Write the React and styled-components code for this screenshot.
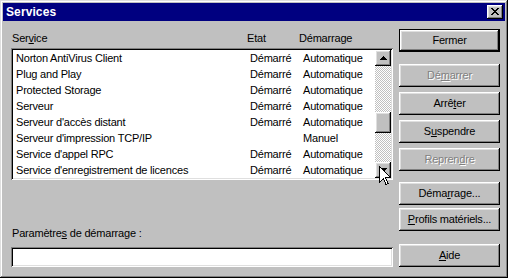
import React from 'react';
import styled, {createGlobalStyle, css} from 'styled-components';

const GlobalStyle = createGlobalStyle`
    html, body{
        margin: 0;
        padding: 0;
        background: #c0c0c0;
    }
    body{
        font-family: "Liberation Sans", Arial, sans-serif;
        font-size: 11px;
        letter-spacing: -0.2px;
        color: #000;
    }
`

const raised = css`
    box-shadow: inset -1px -1px #000, inset 1px 1px #fff, inset -2px -2px #808080, inset 2px 2px #dfdfdf;
`

const sunken = css`
    box-shadow: inset 1px 1px #808080, inset -1px -1px #fff, inset 2px 2px #000, inset -2px -2px #dfdfdf;
`

const Window = styled.div`
    position: relative;
    width: 508px;
    height: 278px;
    box-sizing: border-box;
    padding: 3px;
    background: #c0c0c0;
    box-shadow: inset -1px -1px #000, inset 1px 1px #dfdfdf, inset -2px -2px #808080, inset 2px 2px #fff;
    display: flex;
    flex-direction: column;
`

const TitleBar = styled.div`
    height: 18px;
    flex-shrink: 0;
    background: #000080;
    color: #fff;
    display: flex;
    align-items: center;
    justify-content: space-between;
    padding: 0 2px 0 3px;
`

const Title = styled.span`
    font-weight: bold;
    font-size: 12px;
    letter-spacing: 0.1px;
    line-height: 14px;
`

const CloseButton = styled.div`
    width: 16px;
    height: 14px;
    background: #c0c0c0;
    ${raised}
    display: flex;
    align-items: center;
    justify-content: center;
    padding-bottom: 1px;
    box-sizing: border-box;
`

const Body = styled.div`
    flex: 1;
    display: grid;
    grid-template-columns: 382px 101px;
    column-gap: 6px;
    padding: 8px 0 8px 8px;
`

const LeftColumn = styled.div`
    display: flex;
    flex-direction: column;
`

const Header = styled.div`
    height: 19px;
    display: grid;
    grid-template-columns: 235px 52px 1fr;
    align-items: center;
    padding-left: 1px;
    line-height: 13px;
`

const ListBox = styled.div`
    height: 132px;
    box-sizing: border-box;
    padding: 2px;
    background: #fff;
    ${sunken}
    display: flex;
`

const Rows = styled.div`
    flex: 1;
`

const Row = styled.div`
    height: 16px;
    line-height: 16px;
    display: grid;
    grid-template-columns: 234px 53px 1fr;
    padding-left: 3px;
    white-space: nowrap;
`

const ScrollBar = styled.div`
    width: 16px;
    display: flex;
    flex-direction: column;
`

const ScrollButton = styled.div`
    width: 16px;
    height: 16px;
    flex-shrink: 0;
    background: #c0c0c0;
    ${raised}
    display: flex;
    align-items: center;
    justify-content: center;
`

const Track = styled.div`
    flex: 1;
    background-color: #fff;
    background-image: repeating-conic-gradient(#c0c0c0 0% 25%, #fff 0% 50%);
    background-size: 2px 2px;
`

const Thumb = styled.div`
    margin-top: 46px;
    height: 21px;
    background: #c0c0c0;
    ${raised}
`

const FieldLabel = styled.div`
    margin-top: auto;
    line-height: 14px;
    padding-left: 1px;
`

const TextInput = styled.div`
    margin-top: 7px;
    height: 20px;
    background: #fff;
    ${sunken}
`

const RightColumn = styled.div`
    display: flex;
    flex-direction: column;
`

const Button = styled.div`
    height: 23px;
    flex-shrink: 0;
    box-sizing: border-box;
    margin-top: ${p => p.$gap || 0}px;
    display: flex;
    align-items: center;
    justify-content: center;
    background: #c0c0c0;
    color: ${p => p.$disabled ? '#808080' : '#000'};
    text-shadow: ${p => p.$disabled ? '1px 1px #fff' : 'none'};
    ${p => p.$default
        ? css`
            border: 1px solid #000;
            box-shadow: inset -1px -1px #000, inset 1px 1px #fff, inset -2px -2px #808080, inset 2px 2px #dfdfdf;
        `
        : raised}
    ${p => p.$push && css`margin-top: auto;`}
    padding-bottom: 1px;
`

const Key = styled.span`
    text-decoration: underline;
    text-underline-offset: 1px;
`

const Cursor = styled.svg`
    position: absolute;
    left: 379px;
    top: 166px;
`

const services = [
    ['Norton AntiVirus Client', 'Démarré', 'Automatique'],
    ['Plug and Play', 'Démarré', 'Automatique'],
    ['Protected Storage', 'Démarré', 'Automatique'],
    ['Serveur', 'Démarré', 'Automatique'],
    ["Serveur d'accès distant", 'Démarré', 'Automatique'],
    ["Serveur d'impression TCP/IP", '', 'Manuel'],
    ["Service d'appel RPC", 'Démarré', 'Automatique'],
    ["Service d'enregistrement de licences", 'Démarré', 'Automatique'],
]

const CloseIcon = () => (
    <svg width="8" height="7" viewBox="0 0 8 7" shapeRendering="crispEdges">
        <path fill="#000" d="M0 0h2v1H0zM6 0h2v1H6zM1 1h2v1H1zM5 1h2v1H5zM2 2h4v1H2zM3 3h2v1H3zM2 4h4v1H2zM1 5h2v1H1zM5 5h2v1H5zM0 6h2v1H0zM6 6h2v1H6z"/>
    </svg>
)

const Arrow = ({down}) => (
    <svg width="7" height="4" viewBox="0 0 7 4" shapeRendering="crispEdges">
        <path fill="#000" d={down
            ? 'M0 0h7v1H0zM1 1h5v1H1zM2 2h3v1H2zM3 3h1v1H3z'
            : 'M3 0h1v1H3zM2 1h3v1H2zM1 2h5v1H1zM0 3h7v1H0z'}/>
    </svg>
)

const App = () => {
    return(
        <>
            <GlobalStyle/>
            <Window>
                <TitleBar>
                    <Title>Services</Title>
                    <CloseButton><CloseIcon/></CloseButton>
                </TitleBar>
                <Body>
                    <LeftColumn>
                        <Header>
                            <span>Ser<Key>v</Key>ice</span>
                            <span>Etat</span>
                            <span>Démarrage</span>
                        </Header>
                        <ListBox>
                            <Rows>
                                {services.map(([name, state, start]) => (
                                    <Row key={name}>
                                        <span>{name}</span>
                                        <span>{state}</span>
                                        <span>{start}</span>
                                    </Row>
                                ))}
                            </Rows>
                            <ScrollBar>
                                <ScrollButton><Arrow/></ScrollButton>
                                <Track><Thumb/></Track>
                                <ScrollButton><Arrow down/></ScrollButton>
                            </ScrollBar>
                        </ListBox>
                        <FieldLabel>Paramètre<Key>s</Key> de démarrage :</FieldLabel>
                        <TextInput/>
                    </LeftColumn>
                    <RightColumn>
                        <Button $default>Fermer</Button>
                        <Button $gap={12} $disabled>Dé<Key>m</Key>arrer</Button>
                        <Button $gap={5}>Arrê<Key>t</Key>er</Button>
                        <Button $gap={5}>S<Key>u</Key>spendre</Button>
                        <Button $gap={5} $disabled>Repren<Key>d</Key>re</Button>
                        <Button $gap={11}>Déma<Key>r</Key>rage...</Button>
                        <Button $gap={3}><Key>P</Key>rofils matériels...</Button>
                        <Button $push><Key>A</Key>ide</Button>
                    </RightColumn>
                </Body>
                <Cursor width="12" height="20" viewBox="0 0 12 20" shapeRendering="crispEdges">
                    <path d="M0.5 0.5 L0.5 16.5 L4.5 12.5 L7 18.5 L9 17.5 L6.5 11.5 L11.5 11.5 Z" fill="#fff" stroke="#000" strokeWidth="1"/>
                </Cursor>
            </Window>
        </>
    )
}

export default App
